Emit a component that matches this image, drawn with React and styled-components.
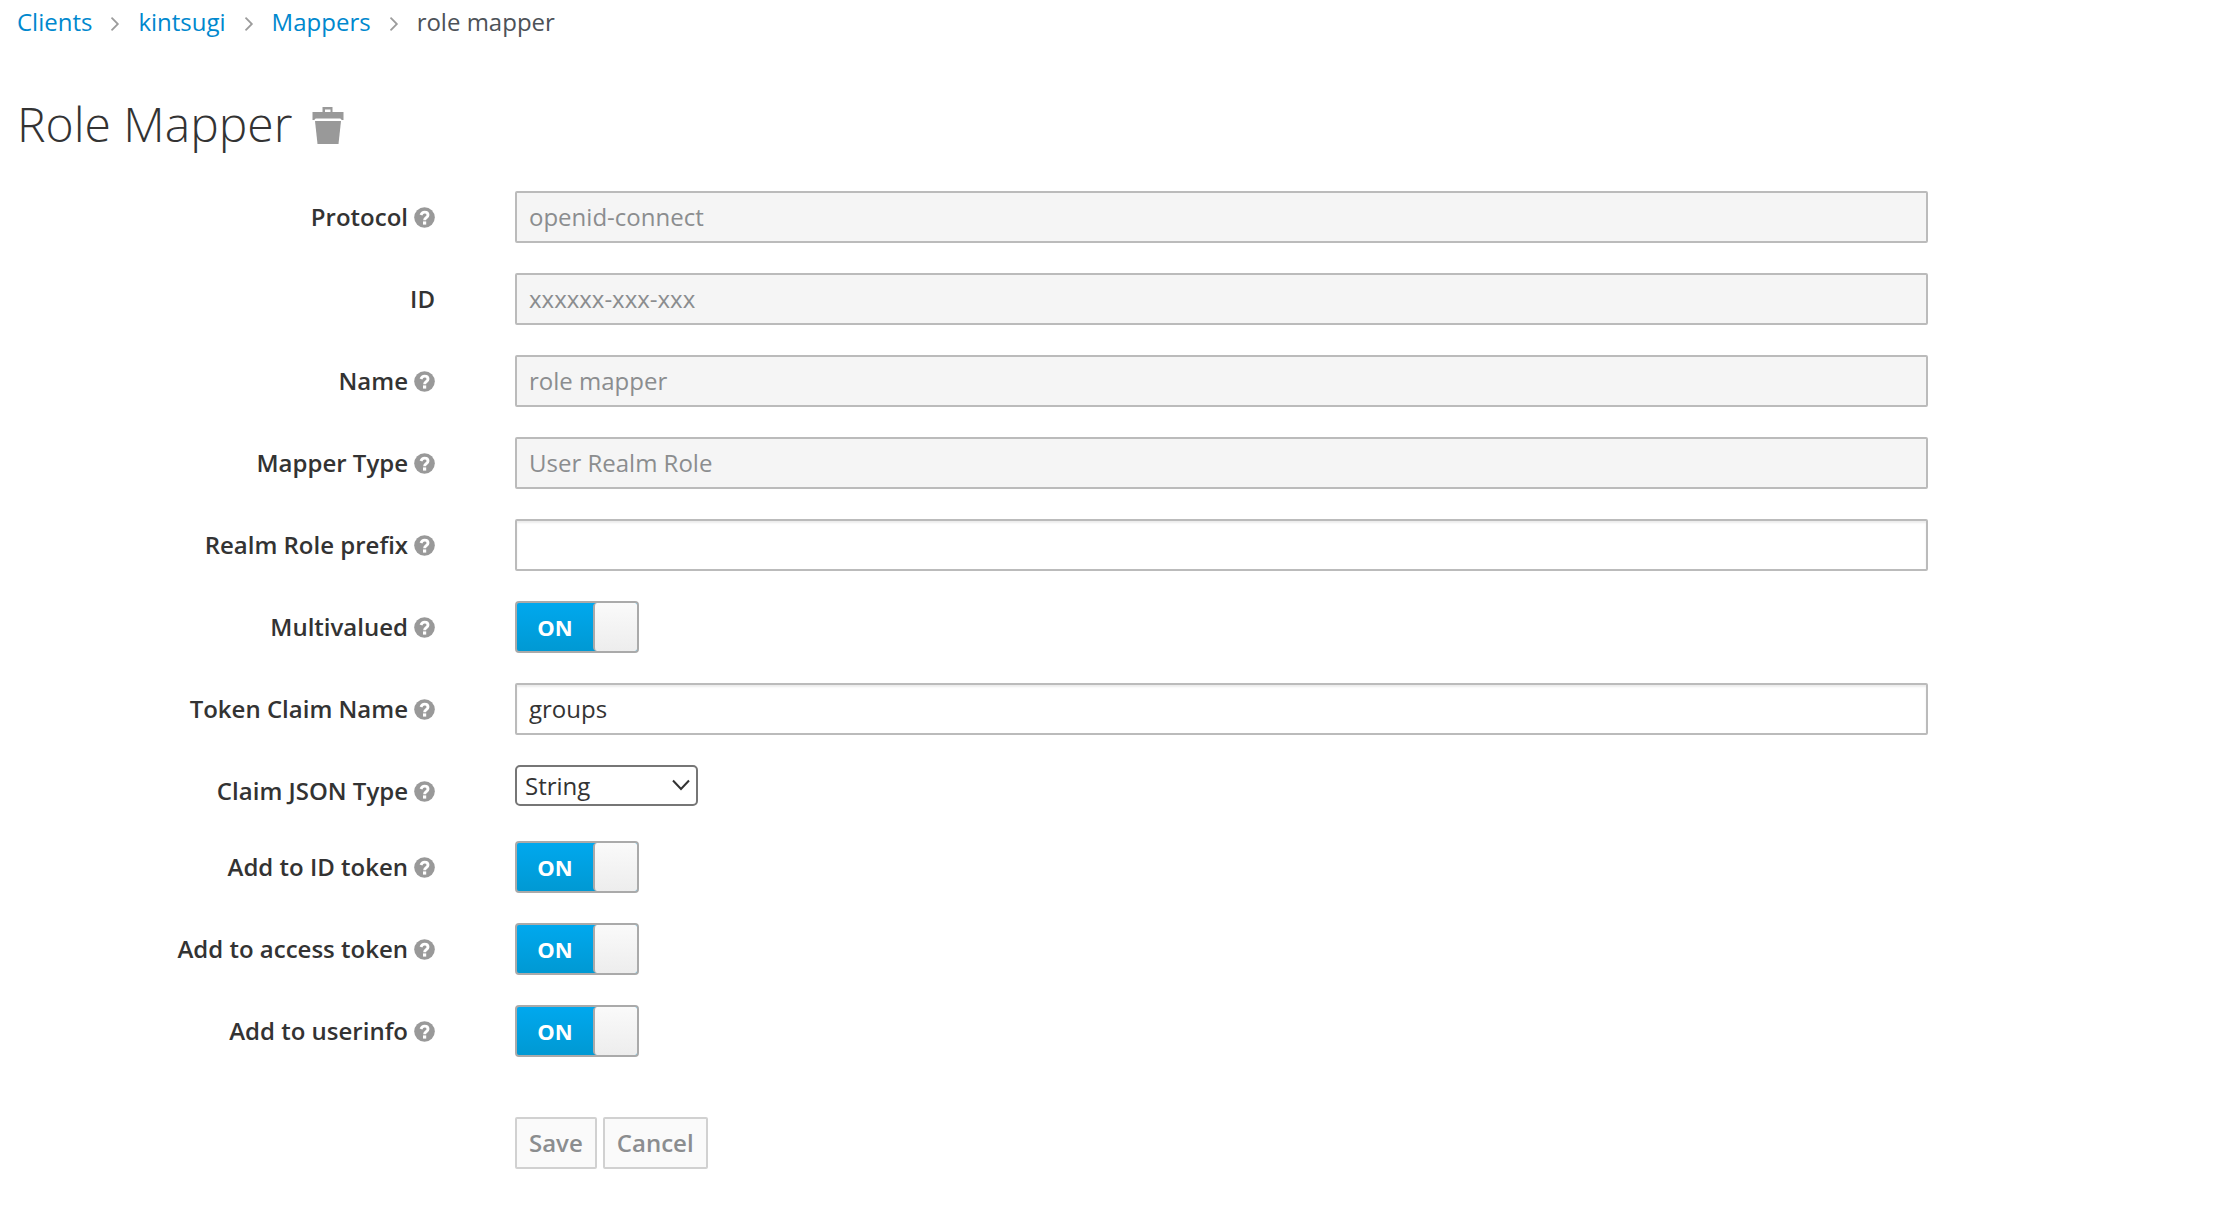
import React from "react";
import styled, { createGlobalStyle } from "styled-components";

const Global = createGlobalStyle`
  * {
    box-sizing: border-box;
  }
  body {
    margin: 0;
    background: #fff;
    color: #333;
    font-family: "Open Sans", "Noto Sans", sans-serif;
    font-size: 24px;
    line-height: 40px;
  }
`;

const fields = [
  { id: "protocol", label: "Protocol", help: true, value: "openid-connect", disabled: true },
  { id: "mapper-id", label: "ID", value: "xxxxxx-xxx-xxx", disabled: true },
  { id: "name", label: "Name", help: true, value: "role mapper", disabled: true },
  { id: "type", label: "Mapper Type", help: true, value: "User Realm Role", disabled: true },
  { id: "prefix", label: "Realm Role prefix", help: true, value: "" },
  { id: "multivalued", label: "Multivalued", help: true, kind: "switch" },
  { id: "claim-name", label: "Token Claim Name", help: true, value: "groups" },
  { id: "claim-type", label: "Claim JSON Type", help: true, kind: "select" },
  { id: "id-token", label: "Add to ID token", help: true, kind: "switch" },
  { id: "access-token", label: "Add to access token", help: true, kind: "switch" },
  { id: "userinfo", label: "Add to userinfo", help: true, kind: "switch" }
];

const AngleIcon = () => (
  <Angle viewBox="589 461 582 998" aria-hidden="true">
    <path d="M1171 960q0 13-10 23l-466 466q-10 10-23 10t-23-10l-50-50q-10-10-10-23t10-23l393-393-393-393q-10-10-10-23t10-23l50-50q10-10 23-10t23 10l466 466q10 10 10 23z" />
  </Angle>
);

const HelpIcon = () => (
  <Help viewBox="0 0 21 21" aria-hidden="true">
    <circle cx="10.5" cy="10.5" r="10.3" fill="#999" />
    <path
      d="M7 8C7.6 6.100 8.900 5.100 10.600 5.100c2 0 3.400 1.200 3.400 2.900 0 2.500-3.400 2.700-3.400 5.200"
      fill="none"
      stroke="#fff"
      strokeWidth="2.900"
    />
    <path d="M9 14.400h3.200v3.200H9z" fill="#fff" />
  </Help>
);

const TrashIcon = () => (
  <svg width="32" height="42" viewBox="0 -4 32 42" fill="#999" aria-hidden="true">
    <path d="M10.500 5V0h10v5h11v8h-2a1.500 1.500 0 0 0-1.500-1.500H4A1.500 1.500 0 0 0 2.500 13h-2V5zM13 5h5.500V2.500H13z" />
    <path d="M3 14h26l-2.500 23h-21z" />
  </svg>
);

const Control = ({ field }) => {
  if (field.kind === "switch") {
    return (
      <Switch>
        <SwitchInput type="checkbox" id={field.id} defaultChecked />
        <SwitchText>ON</SwitchText>
        <SwitchHandle />
      </Switch>
    );
  }
  if (field.kind === "select") {
    return (
      <SelectWrap>
        <Select id={field.id} defaultValue="String">
          <option>String</option>
          <option>long</option>
          <option>int</option>
          <option>boolean</option>
          <option>JSON</option>
        </Select>
        <Chevron viewBox="0 0 18 12" aria-hidden="true">
          <path d="M1 1.500L9 10L17 1.500" />
        </Chevron>
      </SelectWrap>
    );
  }
  return (
    <Input type="text" id={field.id} defaultValue={field.value} disabled={field.disabled} />
  );
};

export default function App() {
  return (
    <Page>
      <Global />
      <Breadcrumb aria-label="Breadcrumb">
        <Link href="#clients">Clients</Link>
        <AngleIcon />
        <Link href="#kintsugi">kintsugi</Link>
        <AngleIcon />
        <Link href="#mappers">Mappers</Link>
        <AngleIcon />
        <Current>role mapper</Current>
      </Breadcrumb>
      <Heading>
        <Title>Role Mapper</Title>
        <IconButton type="button" aria-label="Delete">
          <TrashIcon />
        </IconButton>
      </Heading>
      <Form onSubmit={e => e.preventDefault()}>
        {fields.map(field => (
          <Row key={field.id}>
            <Label htmlFor={field.id}>
              {field.label}
              {field.help && <HelpIcon />}
            </Label>
            <Control field={field} />
          </Row>
        ))}
        <Actions>
          <Button type="submit" disabled>
            Save
          </Button>
          <Button type="button" disabled>
            Cancel
          </Button>
        </Actions>
      </Form>
    </Page>
  );
}

const Page = styled.main`
  padding: 2px 13% 60px 17px;
`;

const Breadcrumb = styled.nav`
  display: flex;
  align-items: center;
  gap: 19px;
`;

const Link = styled.a`
  color: #0088ce;
  text-decoration: none;
`;

const Current = styled.span`
  color: #4d5258;
`;

const Angle = styled.svg`
  width: 8px;
  height: 14px;
  margin-top: 4px;
  fill: #9c9c9c;
`;

const Heading = styled.div`
  display: flex;
  align-items: center;
  gap: 20px;
  margin: 55px 0 41px;
`;

const Title = styled.h1`
  margin: 0;
  font-size: 48px;
  font-weight: 300;
  line-height: 53px;
`;

const IconButton = styled.button`
  display: flex;
  padding: 0;
  border: 0;
  background: none;
  cursor: pointer;
`;

const Form = styled.form`
  display: grid;
  gap: 30px;
`;

const Row = styled.div`
  display: grid;
  grid-template-columns: 418px 1fr;
  column-gap: 80px;
  align-items: start;
`;

const Label = styled.label`
  display: flex;
  justify-content: flex-end;
  align-items: center;
  gap: 6px;
  padding-top: 6px;
  font-weight: 600;
`;

const Help = styled.svg`
  width: 21px;
  height: 21px;
`;

const Input = styled.input`
  width: 100%;
  height: 52px;
  padding: 0 12px 2px;
  border: 2px solid #bbb;
  border-radius: 2px;
  background: #fff;
  box-shadow: inset 0 2px 2px rgba(3, 3, 3, 0.075);
  color: #333;
  font: inherit;

  &:disabled {
    background: #f5f5f5;
    box-shadow: none;
    color: #8b8d8f;
  }
`;

const Switch = styled.span`
  position: relative;
  display: flex;
  width: 124px;
  height: 52px;
  border: 2px solid #aaa;
  border-radius: 4px;
  overflow: hidden;
  background: linear-gradient(#00a8ee, #0099d3);
`;

const SwitchInput = styled.input`
  position: absolute;
  inset: 0;
  width: 100%;
  height: 100%;
  margin: 0;
  opacity: 0;
  cursor: pointer;
`;

const SwitchText = styled.span`
  flex: 1;
  color: #fff;
  font-size: 22px;
  font-weight: 700;
  line-height: 48px;
  text-align: center;
`;

const SwitchHandle = styled.span`
  width: 44px;
  border-left: 2px solid #aaa;
  border-radius: 4px 0 0 4px;
  background: linear-gradient(#fafafa, #ededed);
`;

const SelectWrap = styled.span`
  position: relative;
  justify-self: start;
  display: flex;
`;

const Select = styled.select`
  appearance: none;
  width: 183px;
  height: 41px;
  padding: 0 40px 0 8px;
  border: 2px solid #767676;
  border-radius: 5px;
  background: #fff;
  color: #333;
  font: inherit;
  line-height: 36px;
`;

const Chevron = styled.svg`
  position: absolute;
  top: 14px;
  right: 8px;
  width: 18px;
  height: 12px;
  fill: none;
  stroke: #333;
  stroke-width: 2;
  pointer-events: none;
`;

const Actions = styled.div`
  display: flex;
  gap: 6px;
  margin: 30px 0 0 498px;
`;

const Button = styled.button`
  height: 52px;
  padding: 0 12px;
  border: 2px solid #d1d1d1;
  border-radius: 2px;
  background: #fafafa;
  color: #8b8d8f;
  font: inherit;
  font-weight: 600;
`;
